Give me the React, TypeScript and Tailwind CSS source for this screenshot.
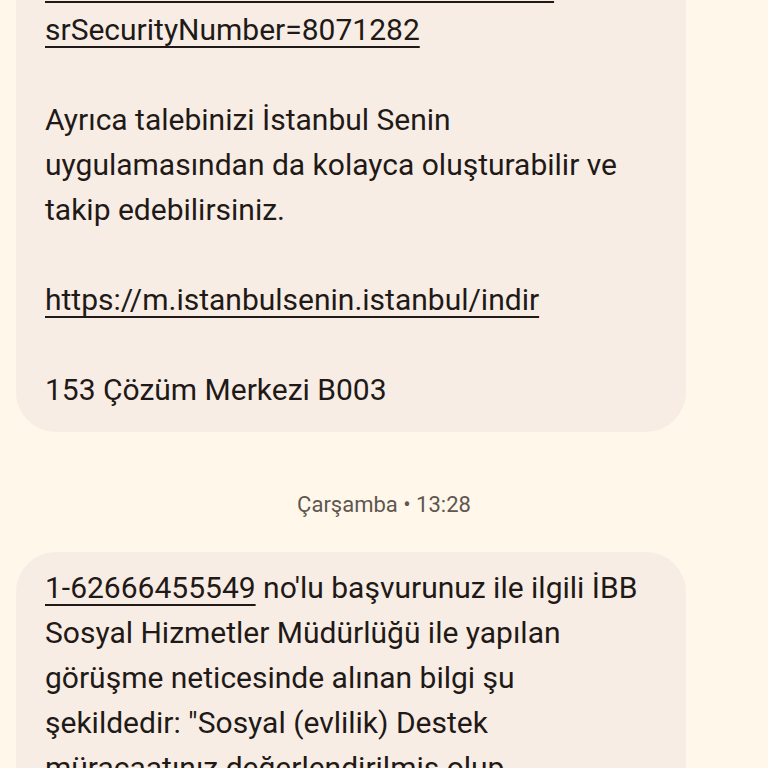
import React from 'react';

const font = { fontFamily: 'Roboto, "Noto Sans", sans-serif' };

function Line({ children }: { children?: React.ReactNode }) {
  return <div className="h-[45px] leading-[45px] whitespace-nowrap">{children ?? '\u00a0'}</div>;
}

function Link({ children }: { children: React.ReactNode }) {
  return <span className="underline decoration-2 underline-offset-[6px]">{children}</span>;
}

export default function App() {
  return (
    <div className="h-[768px] w-[768px] overflow-hidden bg-[#fef7ea] text-[#1f1a17]" style={font}>
      <div className="-mt-[60px] flex flex-col">
        {/* earlier message */}
        <div className="ml-[16px] w-[670px] rounded-[40px] bg-[#f8ede5] pl-[29px] pt-[22px] pb-[20px] text-[30px]">
          <Line>
            <Link>www.ibb.istanbul/basvurutakibi/Detail</Link>
          </Line>
          <Line>
            <Link>srSecurityNumber=8071282</Link>
          </Line>
          <Line />
          <Line>Ayrıca talebinizi İstanbul Senin</Line>
          <Line>uygulamasından da kolayca oluşturabilir ve</Line>
          <Line>takip edebilirsiniz.</Line>
          <Line />
          <Line>
            <Link>https://m.istanbulsenin.istanbul/indir</Link>
          </Line>
          <Line />
          <Line>153 Çözüm Merkezi B003</Line>
        </div>

        {/* date separator */}
        <div className="mt-[59px] h-[28px] text-center text-[22px] leading-[28px] text-[#5f5750]">
          Çarşamba • 13:28
        </div>

        {/* latest message */}
        <div className="ml-[16px] mt-[33px] w-[670px] rounded-[40px] bg-[#f8ede5] pl-[29px] pt-[13px] pb-[20px] text-[30px]">
          <Line>
            <Link>1-62666455549</Link> no'lu başvurunuz ile ilgili İBB
          </Line>
          <Line>Sosyal Hizmetler Müdürlüğü ile yapılan</Line>
          <Line>görüşme neticesinde alınan bilgi şu</Line>
          <Line>şekildedir: "Sosyal (evlilik) Destek</Line>
          <Line>müracaatınız değerlendirilmiş olup</Line>
          <Line>uygun görülmemiştir." Bilgilerinize</Line>
        </div>
      </div>
    </div>
  );
}
